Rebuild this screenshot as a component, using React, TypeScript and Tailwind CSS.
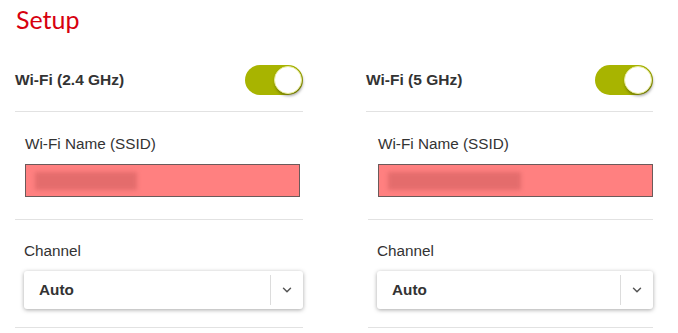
import React, { useState } from 'react';
import { ChevronDown } from 'lucide-react';

// Setup panel: two radio bands side by side
interface BandProps {
  title: string;
  ssidWidth: string;
  wide?: boolean;
}

function Toggle({ on, onClick }: { on: boolean; onClick: () => void }) {
  return (
    <button
      onClick={onClick}
      className={`relative w-[58px] h-[30px] rounded-full ${on ? 'bg-[#a8b400]' : 'bg-gray-300'}`}
    >
      <span
        className={`absolute top-[1px] ${on ? 'right-[1px]' : 'left-[1px]'} w-[28px] h-[28px] rounded-full bg-white border border-[#e8ec9a] shadow-[1px_2px_3px_rgba(0,0,0,0.35)]`}
      />
    </button>
  );
}

function Band({ title, ssidWidth, wide }: BandProps) {
  const [on, setOn] = useState(true);
  return (
    <div className="flex flex-col">
      <div className={`flex items-center justify-between h-[64px] mt-[48px] border-b border-[#e2e2e2] ${wide ? '-ml-[2px]' : ''}`}>
        <span className="text-[15.5px] font-bold text-[#333] leading-none">{title}</span>
        <Toggle on={on} onClick={() => setOn(!on)} />
      </div>

      <div className={`flex flex-col pl-[10px] ${wide ? 'pr-0' : 'pr-[3px]'} border-b border-[#e2e2e2] h-[108px]`}>
        <span className="mt-[23px] text-[15.3px] text-[#333] leading-[18px]">Wi-Fi Name (SSID)</span>
        <div className="mt-[11px] h-[33px] bg-[#ff8080] border border-[#6b5a5a] flex items-center pl-[9px]">
          <div className={`h-[18px] ${ssidWidth} bg-[#e46c6c] blur-[2px]`} />
        </div>
      </div>

      <div className="flex flex-col pl-[9px] border-b border-[#e2e2e2] h-[108px]">
        <span className="mt-[22px] text-[15.3px] text-[#333] leading-[18px]">Channel</span>
        <div className="mt-[11px] h-[38px] bg-white rounded-[3px] shadow-[0_1px_4px_rgba(0,0,0,0.35)] flex items-center">
          <span className="flex-1 pl-[15px] text-[15.3px] font-bold text-[#333]">Auto</span>
          <div className="w-px h-[30px] bg-[#dcdcdc]" />
          <div className="w-[32px] flex justify-center">
            <ChevronDown className="w-[14px] h-[14px] text-[#555]" strokeWidth={2.5} />
          </div>
        </div>
      </div>
    </div>
  );
}

export default function App() {
  return (
    <div className="relative w-[678px] h-[333px] bg-white overflow-hidden" style={{ fontFamily: '"Liberation Sans", Arial, sans-serif' }}>
      <h1
        className="absolute left-[16px] top-[3px] text-[25px] text-[#d7000f] leading-[32px]"
        style={{ fontFamily: 'Lato, "Open Sans", sans-serif' }}
      >
        Setup
      </h1>
      <div className="flex pl-[15px] gap-[65px]">
        <div className="w-[288px]">
          <Band title="Wi-Fi (2.4 GHz)" ssidWidth="w-[102px]" />
        </div>
        <div className="w-[285px]">
          <Band title="Wi-Fi (5 GHz)" ssidWidth="w-[133px]" wide />
        </div>
      </div>
    </div>
  );
}
